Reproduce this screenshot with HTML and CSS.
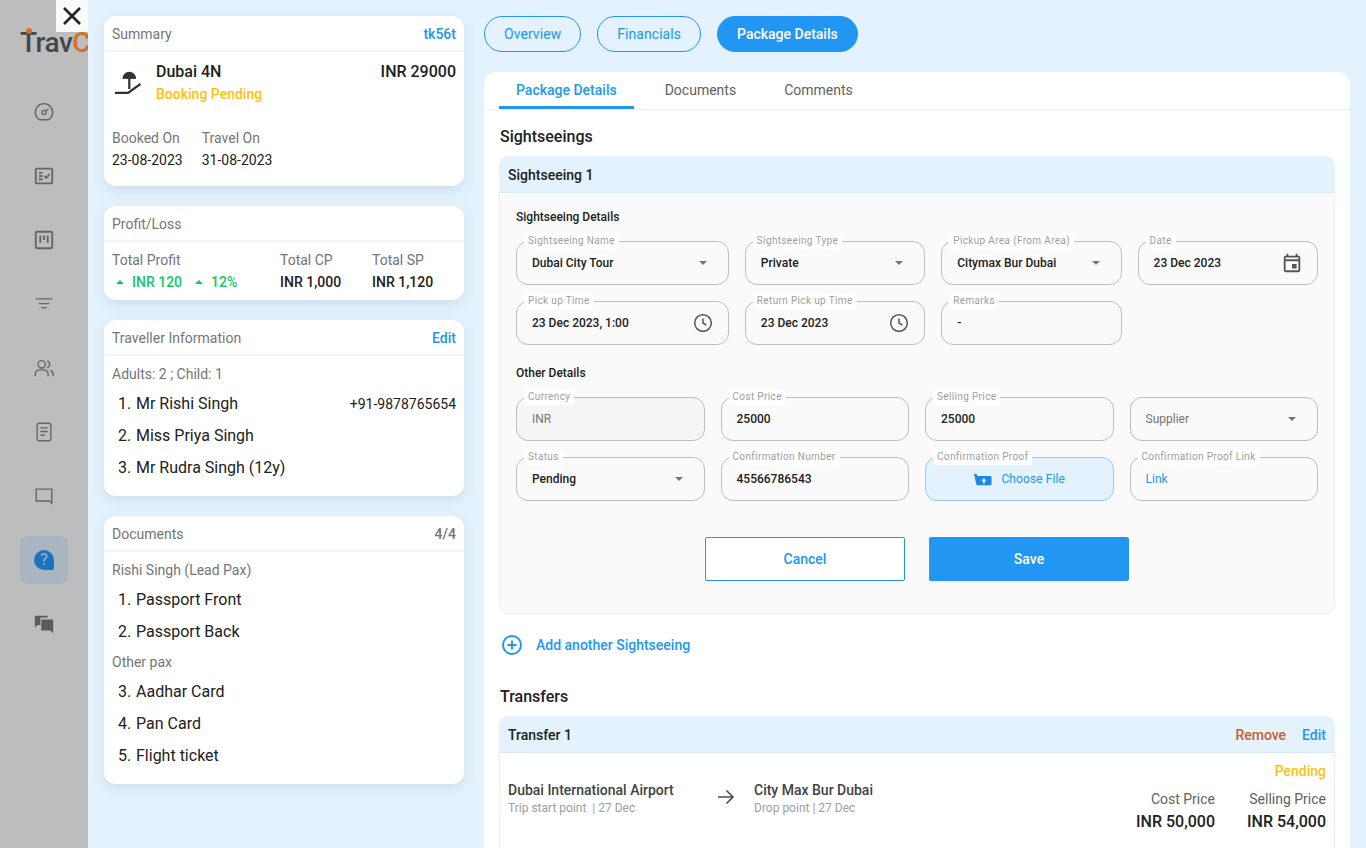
FILE: index.html
```html
<!DOCTYPE html>
<html lang='en'>
<head>
    <meta charset='UTF-8'>
    <title>Booking Package Details</title>
    <link rel="stylesheet" href="styles.css">
</head>
<body>

<div class='page'>
    <aside class='sidebar'>
        <a href='#' class='close-box'>
            <svg class='close-icon' viewBox='0 0 32 32'><path d='M8 8l16 16M24 8L8 24'/></svg>
        </a>
        <div class='logo'><span class='logo-dot'></span>Trav<span class='logo-c'>C</span></div>

        <nav class='side-nav'>
            <a href='#' class='side-item'>
                <svg class='side-icon' viewBox='0 0 24 24'><path d='M7 20.500h10a9.500 9.500 0 1 0-10 0z'/><circle cx='12' cy='12.500' r='2.300'/><path d='M14 11l3-2.500'/></svg>
            </a>
            <a href='#' class='side-item'>
                <svg class='side-icon heavy' viewBox='0 0 24 24'><rect x='3' y='4' width='18' height='16' rx='1'/><path d='M6.500 8.500h4M6.500 12h4M6.500 15.500h4M12.500 12l2 2 3.500-4'/></svg>
            </a>
            <a href='#' class='side-item'>
                <svg class='side-icon heavy' viewBox='0 0 24 24'><rect x='3' y='3' width='18' height='18' rx='1'/><path d='M8 7v8M12 7v5M16 7v8'/></svg>
            </a>
            <a href='#' class='side-item'>
                <svg class='side-icon thin' viewBox='0 0 24 24'><path d='M3 6.500h18M6.500 11.500h11M9 16h6'/></svg>
            </a>
            <a href='#' class='side-item'>
                <svg class='side-icon' viewBox='0 0 24 24'><circle cx='9.500' cy='8' r='4'/><path d='M2.500 21v-2.500a5 5 0 0 1 5-4.500h4a5 5 0 0 1 5 4.500V21M15.500 4.200a4 4 0 0 1 0 7.600M19 14.500a5 5 0 0 1 3 4.500V21'/></svg>
            </a>
            <a href='#' class='side-item'>
                <svg class='side-icon' viewBox='0 0 24 24'><rect x='4.500' y='2.500' width='15' height='19' rx='2.500'/><path d='M8 7.500h8M8 11.500h8M8 15.500h5'/></svg>
            </a>
            <a href='#' class='side-item'>
                <svg class='side-icon' viewBox='0 0 24 24'><path d='M3.500 4.500h17v15.500l-2.500-2.500H3.500z'/></svg>
            </a>
            <a href='#' class='side-item active'>
                <span class='help-bubble'>?</span>
            </a>
            <a href='#' class='side-item'>
                <svg class='side-icon filled' viewBox='0 0 24 24'><path d='M2 3h14v2H8v8H5l-3 3zM9 7h13v15l-3-3H9z'/></svg>
            </a>
        </nav>
    </aside>

    <main class='content'>
        <section class='left-col'>
            <div class='card'>
                <div class='card-head'><span>Summary</span><a href='#' class='link-med'>tk56t</a></div>
                <div class='summary-top'>
                    <svg class='beach-icon' viewBox='0 0 32 32'>
                        <path class='beach-fill' d='M10.500 10.500a6.800 6.800 0 0 1 13.600 0c-1 .8-2.200 .8-3.200 0-1 .8-2.400 .8-3.500 0-1 .8-2.400 .8-3.500 0-1 .8-2.400 .8-3.400 0z'/>
                        <path class='beach-line' d='M17.300 10v11M3 24.800h13l12.500-8.800'/>
                    </svg>
                    <div class='summary-title'>
                        <div class='trip-name'>Dubai 4N</div>
                        <div class='trip-status'>Booking Pending</div>
                    </div>
                    <div class='trip-price'>INR 29000</div>
                </div>
                <div class='summary-dates'>
                    <div><div class='muted'>Booked On</div><div class='date-val'>23-08-2023</div></div>
                    <div><div class='muted'>Travel On</div><div class='date-val'>31-08-2023</div></div>
                </div>
            </div>

            <div class='card'>
                <div class='card-head'><span>Profit/Loss</span></div>
                <div class='profit-grid'>
                    <div>
                        <div class='muted'>Total Profit</div>
                        <div class='gain'><i class='up-caret'></i>INR 120<i class='up-caret second'></i>12%</div>
                    </div>
                    <div><div class='muted'>Total CP</div><div class='amount'>INR 1,000</div></div>
                    <div><div class='muted'>Total SP</div><div class='amount'>INR 1,120</div></div>
                </div>
            </div>

            <div class='card'>
                <div class='card-head'><span>Traveller Information</span><a href='#' class='link-med'>Edit</a></div>
                <div class='card-list'>
                    <div class='muted list-label'>Adults: 2 ; Child: 1</div>
                    <div class='list-row'><span class='num'>1.</span><span class='grow'>Mr Rishi Singh</span><span class='phone'>+91-9878765654</span></div>
                    <div class='list-row'><span class='num'>2.</span><span class='grow'>Miss Priya Singh</span></div>
                    <div class='list-row'><span class='num'>3.</span><span class='grow'>Mr Rudra Singh (12y)</span></div>
                </div>
            </div>

            <div class='card'>
                <div class='card-head'><span>Documents</span><span class='count'>4/4</span></div>
                <div class='card-list'>
                    <div class='muted list-label'>Rishi Singh (Lead Pax)</div>
                    <div class='list-row'><span class='num'>1.</span><span class='grow'>Passport Front</span></div>
                    <div class='list-row'><span class='num'>2.</span><span class='grow'>Passport Back</span></div>
                    <div class='muted list-label second'>Other pax</div>
                    <div class='list-row'><span class='num'>3.</span><span class='grow'>Aadhar Card</span></div>
                    <div class='list-row'><span class='num'>4.</span><span class='grow'>Pan Card</span></div>
                    <div class='list-row'><span class='num'>5.</span><span class='grow'>Flight ticket</span></div>
                </div>
            </div>
        </section>

        <section class='right-col'>
            <div class='pills'>
                <a href='#' class='pill'>Overview</a>
                <a href='#' class='pill'>Financials</a>
                <a href='#' class='pill current'>Package Details</a>
            </div>

            <div class='main-card'>
                <div class='tabs'>
                    <a href='#' class='tab current'>Package Details</a>
                    <a href='#' class='tab'>Documents</a>
                    <a href='#' class='tab'>Comments</a>
                </div>

                <div class='main-body'>
                    <h2 class='block-title'>Sightseeings</h2>

                    <div class='accordion'>
                        <div class='acc-head'><span>Sightseeing 1</span></div>
                        <div class='acc-body'>
                            <h3 class='form-title'>Sightseeing Details</h3>
                            <div class='form-grid top-grid'>
                                <div class='field'><span class='field-label'>Sightseeing Name</span><span class='field-value'>Dubai City Tour</span><i class='caret'></i></div>
                                <div class='field'><span class='field-label'>Sightseeing Type</span><span class='field-value'>Private</span><i class='caret'></i></div>
                                <div class='field'><span class='field-label'>Pickup Area (From Area)</span><span class='field-value'>Citymax Bur Dubai</span><i class='caret'></i></div>
                                <div class='field'><span class='field-label'>Date</span><span class='field-value'>23 Dec 2023</span>
                                    <svg class='field-icon calendar' viewBox='0 0 24 24'><path d='M19 4h-1V2h-2v2H8V2H6v2H5C3.890 4 3.010 4.900 3.010 6L3 20c0 1.100.890 2 2 2h14c1.100 0 2-.9 2-2V6c0-1.100-.9-2-2-2zm0 16H5V10h14v10zm0-12H5V6h14v2zm-7 5h5v5h-5z'/></svg>
                                </div>
                                <div class='field'><span class='field-label'>Pick up Time</span><span class='field-value'>23 Dec 2023, 1:00</span>
                                    <svg class='field-icon' viewBox='0 0 24 24'><circle cx='12' cy='12' r='10'/><path d='M12 6.500V12l4 2.500'/></svg>
                                </div>
                                <div class='field'><span class='field-label'>Return Pick up Time</span><span class='field-value'>23 Dec 2023</span>
                                    <svg class='field-icon' viewBox='0 0 24 24'><circle cx='12' cy='12' r='10'/><path d='M12 6.500V12l4 2.500'/></svg>
                                </div>
                                <div class='field'><span class='field-label'>Remarks</span><span class='field-value'>-</span></div>
                            </div>

                            <h3 class='form-title next'>Other Details</h3>
                            <div class='form-grid'>
                                <div class='field disabled'><span class='field-label'>Currency</span><span class='field-value'>INR</span></div>
                                <div class='field'><span class='field-label'>Cost Price</span><span class='field-value'>25000</span></div>
                                <div class='field'><span class='field-label'>Selling Price</span><span class='field-value'>25000</span></div>
                                <div class='field'><span class='field-value placeholder'>Supplier</span><i class='caret'></i></div>
                                <div class='field'><span class='field-label'>Status</span><span class='field-value'>Pending</span><i class='caret'></i></div>
                                <div class='field'><span class='field-label'>Confirmation Number</span><span class='field-value'>45566786543</span></div>
                                <div class='field upload'><span class='field-label'>Confirmation Proof</span>
                                    <span class='upload-inner'>
                                        <svg class='upload-icon' viewBox='0 0 20 14'>
                                            <path class='upload-body' d='M0 .5l3 .5 .5 2H18a1.500 1.500 0 0 1 1.500 1.500V12a1.500 1.500 0 0 1-1.500 1.500H4a1.500 1.500 0 0 1-1.500-1.500z'/>
                                            <path class='upload-arrow' d='M11 5.500l3 3h-2v3h-2v-3H8z'/>
                                        </svg>
                                        Choose File
                                    </span>
                                </div>
                                <div class='field'><span class='field-label'>Confirmation Proof Link</span><span class='field-value link-val'>Link</span></div>
                            </div>

                            <div class='form-actions'>
                                <a href='#' class='btn btn-outline'>Cancel</a>
                                <a href='#' class='btn btn-solid'>Save</a>
                            </div>
                        </div>
                    </div>

                    <a href='#' class='add-row'>
                        <svg class='add-icon' viewBox='0 0 20 20'><circle cx='10' cy='10' r='9'/><path d='M10 5.500v9M5.500 10h9'/></svg>
                        Add another Sightseeing
                    </a>

                    <h2 class='block-title'>Transfers</h2>

                    <div class='accordion'>
                        <div class='acc-head'>
                            <span>Transfer 1</span>
                            <span class='acc-actions'><a href='#' class='remove'>Remove</a><a href='#' class='link-med'>Edit</a></span>
                        </div>
                        <div class='transfer-body'>
                            <div class='place from'>
                                <div class='place-name'>Dubai International Airport</div>
                                <div class='place-sub'>Trip start point &nbsp;| 27 Dec</div>
                            </div>
                            <svg class='arrow-icon' viewBox='0 0 18 16'><path d='M1 8h15M9.500 1.500L16 8l-6.500 6.500'/></svg>
                            <div class='place'>
                                <div class='place-name'>City Max Bur Dubai</div>
                                <div class='place-sub'>Drop point | 27 Dec</div>
                            </div>
                            <div class='transfer-prices'>
                                <div class='pending'>Pending</div>
                                <div class='price-cols'>
                                    <div><div class='price-label'>Cost Price</div><div class='price-val'>INR 50,000</div></div>
                                    <div><div class='price-label'>Selling Price</div><div class='price-val'>INR 54,000</div></div>
                                </div>
                            </div>
                        </div>
                    </div>
                </div>
            </div>
        </section>
    </main>
</div>

</body>
</html>
```

FILE: styles.css
```css
* {
    box-sizing: border-box;
}

html, body {
    margin: 0;
    height: 100%;
    overflow: hidden;
}

body {
    font-family: Roboto, "Liberation Sans", sans-serif;
    font-size: 14px;
    line-height: 20px;
    color: #212121;
    background: #e3f2fd;
}

a {
    text-decoration: none;
    color: inherit;
}

.page {
    display: flex;
    height: 848px;
    overflow: hidden;
}

/* sidebar */
.sidebar {
    position: relative;
    flex: 0 0 88px;
    overflow: hidden;
    background: #bdbdbd;
}

.close-box {
    position: absolute;
    top: 0;
    right: 0;
    width: 32px;
    height: 32px;
    background: #fafafa;
}

.close-icon {
    display: block;
    width: 32px;
    height: 32px;
    fill: none;
    stroke: #212121;
    stroke-width: 2.5;
}

.logo {
    position: relative;
    height: 88px;
    padding: 26px 0 0 20px;
    font-size: 28px;
    line-height: 34px;
    letter-spacing: -0.5px;
    font-weight: 500;
    color: #43474d;
    white-space: nowrap;
}

.logo-c {
    color: #d5702a;
}

.logo-dot {
    position: absolute;
    top: 28px;
    left: 26px;
    width: 6px;
    height: 6px;
    border-radius: 50%;
    background: #d5702a;
}

.side-nav {
    display: flex;
    flex-direction: column;
    gap: 16px;
    padding-left: 20px;
}

.side-item {
    display: flex;
    align-items: center;
    justify-content: center;
    width: 48px;
    height: 48px;
    border-radius: 8px;
}

.side-item.active {
    background: #a9b6c1;
}

.side-icon {
    width: 22px;
    height: 22px;
    fill: none;
    stroke: #666;
    stroke-width: 1.500;
}

.side-icon.heavy {
    stroke-width: 2;
}

.side-icon.thin {
    stroke-width: 1.300;
}

.side-icon.filled {
    fill: #595b5e;
    stroke: none;
}

.help-bubble {
    display: flex;
    align-items: center;
    justify-content: center;
    width: 20px;
    height: 20px;
    border-radius: 50% 50% 2px 50%;
    background: #1c75bc;
    color: #a3b6c6;
    font-size: 16px;
}

/* main area */
.content {
    flex: 1;
    display: flex;
    gap: 20px;
    padding: 16px 16px 0;
    min-width: 0;
}

.left-col {
    flex: 0 0 360px;
    display: flex;
    flex-direction: column;
    gap: 20px;
}

.right-col {
    flex: 1;
    min-width: 0;
}

.card {
    background: #fff;
    border-radius: 12px;
    box-shadow: 0 4px 12px rgba(90, 120, 150, 0.16);
}

.card-head {
    display: flex;
    justify-content: space-between;
    align-items: center;
    height: 36px;
    padding: 2px 8px 0;
    border-bottom: 2px solid #f5f5f5;
    color: #757575;
}

.link-med {
    color: #2196f3;
    font-weight: 500;
}

.count {
    font-weight: 500;
}

.muted {
    color: #757575;
}

.summary-top {
    display: flex;
    height: 76px;
    padding: 8px 8px 0;
}

.beach-icon {
    flex: 0 0 32px;
    width: 32px;
    height: 32px;
    margin: 8px 12px 0 0;
}

.beach-fill {
    fill: #2f3338;
}

.beach-line {
    fill: none;
    stroke: #2f3338;
    stroke-width: 2.200;
}

.summary-title {
    flex: 1;
}

.trip-name,
.trip-price {
    font-size: 16px;
    line-height: 24px;
    font-weight: 500;
}

.trip-status {
    font-weight: 500;
    color: #ffc107;
}

.summary-dates {
    display: flex;
    gap: 19px;
    height: 58px;
    padding: 0 8px;
}

.date-val {
    margin-top: 2px;
}

.profit-grid {
    display: grid;
    grid-template-columns: 168px 92px 1fr;
    height: 58px;
    padding: 8px 8px 0;
}

.gain,
.amount {
    margin-top: 2px;
    font-weight: 500;
}

.gain {
    display: flex;
    align-items: center;
    color: #12c766;
}

.up-caret {
    width: 0;
    height: 0;
    margin: 0 8px 0 4px;
    border-left: 4px solid transparent;
    border-right: 4px solid transparent;
    border-bottom: 4px solid #12c766;
}

.up-caret.second {
    margin-left: 13px;
}

.card-list {
    padding: 8px 8px 12px;
}

.list-label.second {
    margin-top: 4px;
}

.list-label {
    height: 20px;
}

.list-label + .list-row {
    margin-top: 4px;
}

.list-row {
    display: flex;
    align-items: center;
    height: 32px;
    font-size: 16px;
}

.num {
    flex: 0 0 24px;
    padding-left: 6px;
}

.grow {
    flex: 1;
}

.phone {
    font-size: 14px;
}

/* pills and tabs */
.pills {
    display: flex;
    gap: 16px;
    height: 36px;
    margin-bottom: 20px;
}

.pill {
    display: flex;
    align-items: center;
    padding: 0 19px;
    border: 1px solid #2196f3;
    border-radius: 18px;
    color: #2196f3;
    letter-spacing: 0.06px;
}

.pill.current {
    background: #2196f3;
    color: #fff;
    font-weight: 500;
    letter-spacing: 0;
}

.main-card {
    background: #fff;
    border-radius: 12px 12px 0 0;
}

.tabs {
    display: flex;
    gap: 14px;
    height: 38px;
    padding-left: 15px;
    border-bottom: 1px solid #eeeeee;
}

.tab {
    display: flex;
    align-items: center;
    height: 37px;
    padding: 0 17px 1px;
    color: #616161;
}

.tab.current {
    border-bottom: 3px solid #2196f3;
    padding: 2px 17px 0;
    color: #2196f3;
    font-weight: 500;
}

.main-body {
    padding: 15px 15px 0;
}

.block-title {
    margin: 0 0 7px;
    padding-left: 1px;
    font-size: 16px;
    line-height: 24px;
    font-weight: 500;
}

/* accordion */
.accordion {
    border: 1px solid #e8f1f8;
    border-radius: 10px;
}

.acc-head {
    display: flex;
    justify-content: space-between;
    align-items: center;
    height: 37px;
    padding: 2px 9px 0;
    margin: -1px -1px 0;
    border-radius: 10px 10px 0 0;
    background: #e3f2fd;
    border-bottom: 1px solid #d9e9f6;
    font-weight: 500;
}

.acc-actions {
    display: flex;
    gap: 16px;
}

.remove {
    color: #c4621f;
}

.acc-body {
    padding: 16px 16px 32px;
    background: #fafafa;
    border-radius: 0 0 10px 10px;
}

.form-title {
    margin: 0 0 16px;
    font-size: 12px;
    line-height: 16px;
    font-weight: 500;
}

.form-title.next {
    margin-top: 20px;
}

.form-grid {
    display: grid;
    grid-template-columns: repeat(4, 1fr);
    gap: 16px;
}

.top-grid {
    grid-template-columns: 1.18fr 1fr 1fr 1fr;
}

.field {
    position: relative;
    display: flex;
    align-items: center;
    justify-content: space-between;
    height: 44px;
    padding: 0 16px 0 15px;
    border: 1px solid #bdbdbd;
    border-radius: 12px;
    font-size: 12px;
}

.field-label {
    position: absolute;
    top: -9px;
    left: 7px;
    padding: 0 4px;
    height: 16px;
    line-height: 16px;
    font-size: 10px;
    letter-spacing: 0.35px;
    color: #9e9e9e;
    background: #fff;
    white-space: nowrap;
}

.field-value {
    font-weight: 500;
}

.field.disabled {
    background: #f5f5f5;
}

.field.disabled .field-value,
.field-value.placeholder {
    font-weight: 400;
    color: #757575;
}

.link-val {
    font-weight: 400;
    color: #2196f3;
}

.caret {
    width: 0;
    height: 0;
    margin-right: 5px;
    border-left: 4px solid transparent;
    border-right: 4px solid transparent;
    border-top: 4px solid #757575;
}

.field-icon {
    width: 20px;
    height: 20px;
    margin-right: -1px;
    fill: none;
    stroke: #555;
    stroke-width: 1.800;
}

.field-icon.calendar {
    width: 22px;
    height: 22px;
    margin-right: -2px;
    fill: #555;
    stroke: none;
}

.field.upload {
    justify-content: center;
    background: #e3f2fd;
    border-color: #90caf9;
}

.upload-inner {
    display: flex;
    align-items: center;
    gap: 9px;
    padding-left: 2px;
    color: #2196f3;
    letter-spacing: 0.1px;
}

.upload-icon {
    width: 18px;
    height: 13px;
}

.upload-body {
    fill: #1e88e5;
}

.upload-arrow {
    fill: #e3f2fd;
}

.form-actions {
    display: flex;
    justify-content: center;
    gap: 24px;
    margin-top: 36px;
}

.btn {
    display: flex;
    align-items: center;
    justify-content: center;
    width: 200px;
    height: 44px;
    border-radius: 2px;
    border: 1px solid #2196f3;
    font-weight: 500;
}

.btn-outline {
    background: #fff;
    color: #2196f3;
}

.btn-solid {
    background: #2196f3;
    color: #fff;
}

.add-row {
    display: flex;
    align-items: center;
    gap: 14px;
    height: 20px;
    margin: 21px 0 30px 3px;
    color: #2196f3;
    font-weight: 500;
}

.add-icon {
    width: 20px;
    height: 20px;
    fill: none;
    stroke: #2196f3;
    stroke-width: 1.900;
}

/* transfer */
.transfer-body {
    display: flex;
    align-items: flex-start;
    height: 120px;
    padding: 8px 8px 0;
}

.place {
    margin-top: 20px;
}

.place.from {
    width: 209px;
}

.place-name {
    font-weight: 500;
    color: #424242;
    line-height: 18px;
}

.place-sub {
    font-size: 12px;
    line-height: 18px;
    color: #9e9e9e;
}

.arrow-icon {
    flex: 0 0 18px;
    width: 18px;
    height: 16px;
    margin: 28px 19px 0 0;
    fill: none;
    stroke: #4a4f55;
    stroke-width: 1.600;
}

.transfer-prices {
    margin-left: auto;
    text-align: right;
}

.pending {
    margin-bottom: 8px;
    font-weight: 500;
    color: #ffc107;
}

.price-cols {
    display: flex;
    gap: 32px;
}

.price-label {
    color: #616161;
}

.price-val {
    margin-top: 1px;
    font-size: 16px;
    line-height: 24px;
    font-weight: 500;
}
```
